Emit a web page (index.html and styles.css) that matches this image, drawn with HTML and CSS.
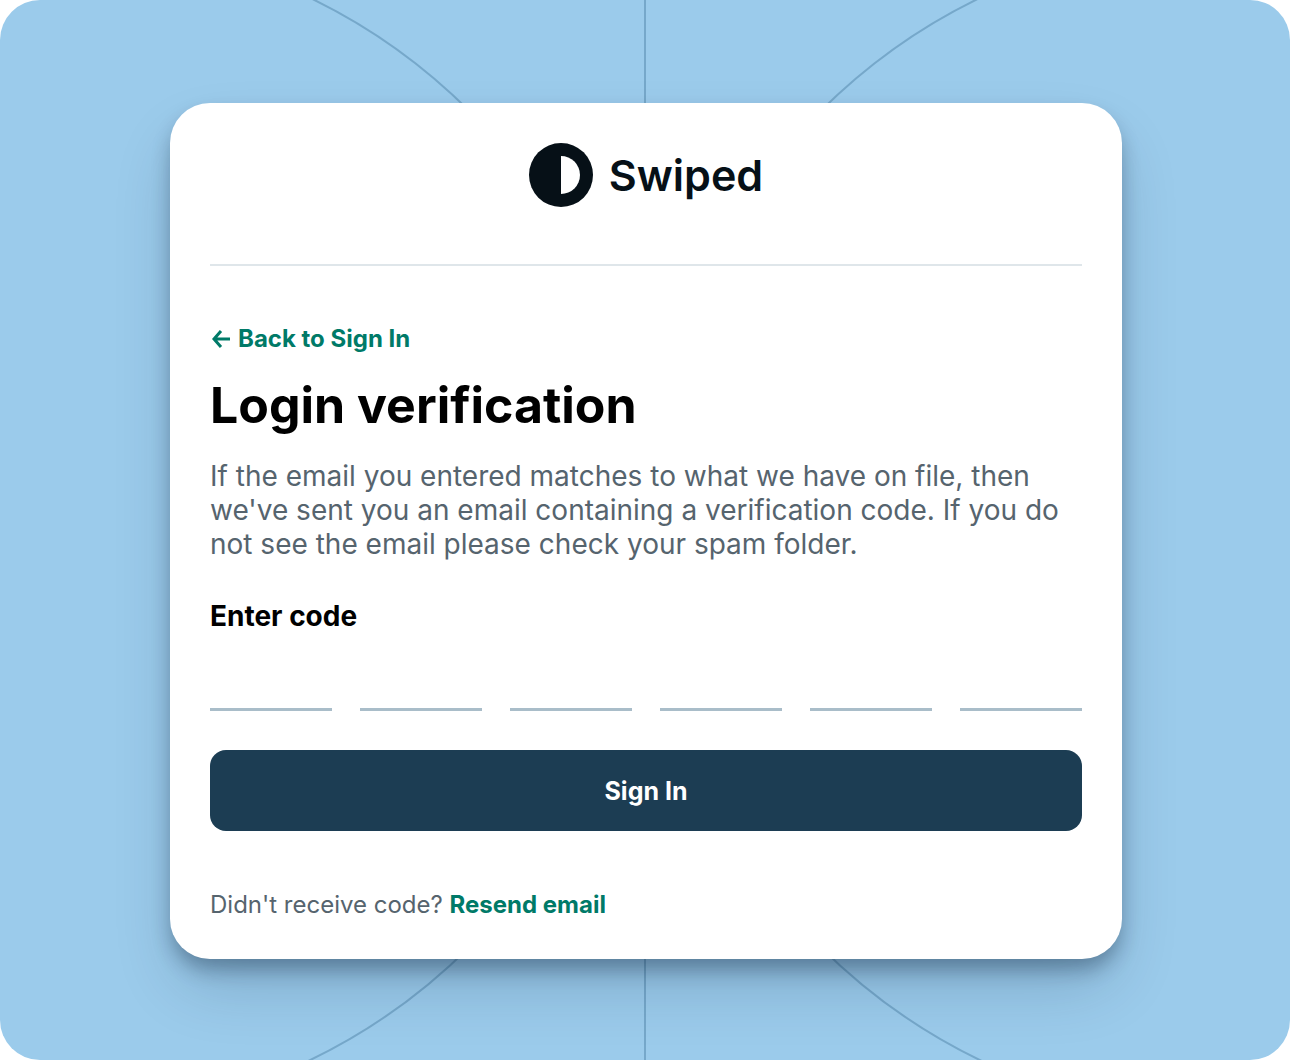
FILE: index.html
```html
<!DOCTYPE html>
<html lang="en">

  <head>
    <meta charset="UTF-8">
    <meta name="viewport" content="width=device-width, initial-scale=1.0">
    <title>Swiped - Login verification</title>
    <link rel="stylesheet" href="styles.css">
  </head>

  <body>
    <div class="page">
      <svg class="page-lines" viewBox="0 0 1290 1060" preserveAspectRatio="xMidYMid slice" aria-hidden="true">
        <circle cx="53" cy="529" r="590" />
        <circle cx="1237" cy="529" r="590" />
        <path d="M645 -200V1260" />
      </svg>

      <main class="card">
        <header class="brand">
          <svg class="brand-icon" viewBox="0 0 64 64" aria-hidden="true">
            <circle cx="32" cy="32" r="32" fill="#061017" />
            <path d="M32 13a19 19 0 0 1 0 38z" fill="#fff" />
          </svg>
          <span class="brand-name">Swiped</span>
        </header>

        <a class="link back-link" href="#">
          <svg class="back-icon" viewBox="0 0 22 22" aria-hidden="true">
            <path d="M20 11H4M11 3L4 11l7 8" />
          </svg>
          Back to Sign In
        </a>

        <h1>Login verification</h1>
        <p class="intro">If the email you entered matches to what we have on file, then we've sent you an email containing a verification code. If you do not see the email please check your spam folder.</p>

        <form>
          <label class="code-label" for="code-1">Enter code</label>
          <div class="code">
            <input id="code-1" type="text" inputmode="numeric" maxlength="1">
            <input type="text" inputmode="numeric" maxlength="1" aria-label="Digit 2">
            <input type="text" inputmode="numeric" maxlength="1" aria-label="Digit 3">
            <input type="text" inputmode="numeric" maxlength="1" aria-label="Digit 4">
            <input type="text" inputmode="numeric" maxlength="1" aria-label="Digit 5">
            <input type="text" inputmode="numeric" maxlength="1" aria-label="Digit 6">
          </div>
          <button class="submit" type="submit">Sign In</button>
        </form>

        <p class="resend">Didn't receive code? <a class="link" href="#">Resend email</a></p>
      </main>
    </div>
  </body>

</html>
```
FILE: styles.css
```css
:root {
  --sky: #9bcbeb;
  --navy: #1c3d53;
  --green: #007a68;
  --muted: #56646e;
}

* {
  box-sizing: border-box;
}

body {
  margin: 0;
  font-family: Inter, "Liberation Sans", sans-serif;
  background-color: #fff;
  color: #000;
}

.page {
  position: relative;
  display: flex;
  align-items: center;
  justify-content: center;
  min-height: 100vh;
  padding: 42px 20px 40px 22px;
  border-radius: 40px;
  background-color: var(--sky);
  overflow: hidden;
}

.page-lines {
  position: absolute;
  inset: 0;
  width: 100%;
  height: 100%;
  fill: none;
  stroke: #76a8ca;
  stroke-width: 2;
}

.card {
  position: relative;
  width: 100%;
  max-width: 952px;
  padding: 40px;
  border-radius: 40px;
  background-color: #fff;
  box-shadow: 0 12px 20px -2px rgba(0, 20, 40, 0.32), 0 32px 64px -8px rgba(0, 30, 60, 0.2);
}

.brand {
  display: flex;
  align-items: center;
  justify-content: center;
  gap: 16px;
  padding-bottom: 57px;
  border-bottom: 2px solid #dfe6ea;
  color: #061017;
}

.brand-icon {
  width: 64px;
  height: 64px;
}

.brand-name {
  font-size: 43px;
  line-height: 52px;
  font-weight: 600;
}

.link {
  color: var(--green);
  font-size: 24px;
  line-height: 28px;
  font-weight: 700;
  text-decoration: none;
}

.back-link {
  display: flex;
  align-items: center;
  gap: 6px;
  margin-top: 59px;
}

.back-icon {
  width: 22px;
  height: 22px;
  fill: none;
  stroke: currentColor;
  stroke-width: 3;
}

h1 {
  margin: 20px 0 22px;
  font-size: 50px;
  line-height: 64px;
  font-weight: 700;
}

.intro {
  margin: 0;
  color: var(--muted);
  font-size: 28px;
  line-height: 34px;
}

.code-label {
  display: block;
  margin-top: 37px;
  font-size: 28px;
  line-height: 36px;
  font-weight: 700;
}

.code {
  display: grid;
  grid-template-columns: repeat(6, 1fr);
  gap: 28px;
}

.code input {
  min-width: 0;
  height: 77px;
  padding: 0;
  border: none;
  border-bottom: 3px solid #a9bdc9;
  background: none;
  font: inherit;
  font-size: 44px;
  text-align: center;
}

.submit {
  display: block;
  width: 100%;
  height: 81px;
  margin-top: 39px;
  border: none;
  border-radius: 16px;
  background-color: var(--navy);
  color: #fff;
  font-family: inherit;
  font-size: 25px;
  font-weight: 700;
  cursor: pointer;
}

.resend {
  margin: 60px 0 0;
  color: var(--muted);
  font-size: 24px;
  line-height: 28px;
}

@media (max-width: 600px) {
  .card {
    padding: 24px;
  }

  .code {
    gap: 12px;
  }
}
```
